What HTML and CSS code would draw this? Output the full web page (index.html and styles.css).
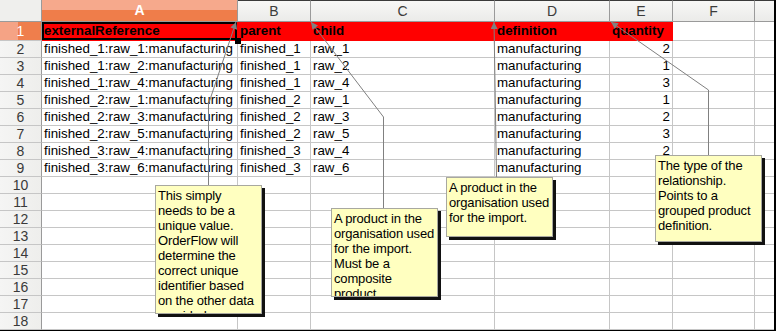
FILE: index.html
```html
<!DOCTYPE html>
<html>
<head>
<meta charset="utf-8">
<link rel="stylesheet" href="styles.css">
</head>
<body>
<div class="sheet">
  <div class="ch corner"></div>
  <div class="ch sel">A</div>
  <div class="ch top">B</div>
  <div class="ch top">C</div>
  <div class="ch top">D</div>
  <div class="ch top">E</div>
  <div class="ch top">F</div>
  <div class="ch top g"></div>

  <div class="rh selr">1</div>
  <div class="c hd a1">externalReference</div>
  <div class="c hd">parent</div>
  <div class="c hd">child</div>
  <div class="c hd">definition</div>
  <div class="c hd">quantity</div>
  <div class="c"></div>
  <div class="c g"></div>

  <div class="rh">2</div><div class="c">finished_1:raw_1:manufacturing</div><div class="c">finished_1</div><div class="c">raw_1</div><div class="c">manufacturing</div><div class="c n">2</div><div class="c"></div><div class="c g"></div>
  <div class="rh">3</div><div class="c">finished_1:raw_2:manufacturing</div><div class="c">finished_1</div><div class="c">raw_2</div><div class="c">manufacturing</div><div class="c n">1</div><div class="c"></div><div class="c g"></div>
  <div class="rh">4</div><div class="c">finished_1:raw_4:manufacturing</div><div class="c">finished_1</div><div class="c">raw_4</div><div class="c">manufacturing</div><div class="c n">3</div><div class="c"></div><div class="c g"></div>
  <div class="rh">5</div><div class="c">finished_2:raw_1:manufacturing</div><div class="c">finished_2</div><div class="c">raw_1</div><div class="c">manufacturing</div><div class="c n">1</div><div class="c"></div><div class="c g"></div>
  <div class="rh">6</div><div class="c">finished_2:raw_3:manufacturing</div><div class="c">finished_2</div><div class="c">raw_3</div><div class="c">manufacturing</div><div class="c n">2</div><div class="c"></div><div class="c g"></div>
  <div class="rh">7</div><div class="c">finished_2:raw_5:manufacturing</div><div class="c">finished_2</div><div class="c">raw_5</div><div class="c">manufacturing</div><div class="c n">3</div><div class="c"></div><div class="c g"></div>
  <div class="rh">8</div><div class="c">finished_3:raw_4:manufacturing</div><div class="c">finished_3</div><div class="c">raw_4</div><div class="c">manufacturing</div><div class="c n">2</div><div class="c"></div><div class="c g"></div>
  <div class="rh">9</div><div class="c">finished_3:raw_6:manufacturing</div><div class="c">finished_3</div><div class="c">raw_6</div><div class="c">manufacturing</div><div class="c n">2</div><div class="c"></div><div class="c g"></div>
  <div class="rh">10</div><div class="c"></div><div class="c"></div><div class="c"></div><div class="c"></div><div class="c"></div><div class="c"></div><div class="c g"></div>
  <div class="rh">11</div><div class="c"></div><div class="c"></div><div class="c"></div><div class="c"></div><div class="c"></div><div class="c"></div><div class="c g"></div>
  <div class="rh">12</div><div class="c"></div><div class="c"></div><div class="c"></div><div class="c"></div><div class="c"></div><div class="c"></div><div class="c g"></div>
  <div class="rh">13</div><div class="c"></div><div class="c"></div><div class="c"></div><div class="c"></div><div class="c"></div><div class="c"></div><div class="c g"></div>
  <div class="rh">14</div><div class="c"></div><div class="c"></div><div class="c"></div><div class="c"></div><div class="c"></div><div class="c"></div><div class="c g"></div>
  <div class="rh">15</div><div class="c"></div><div class="c"></div><div class="c"></div><div class="c"></div><div class="c"></div><div class="c"></div><div class="c g"></div>
  <div class="rh">16</div><div class="c"></div><div class="c"></div><div class="c"></div><div class="c"></div><div class="c"></div><div class="c"></div><div class="c g"></div>
  <div class="rh">17</div><div class="c"></div><div class="c"></div><div class="c"></div><div class="c"></div><div class="c"></div><div class="c"></div><div class="c g"></div>
  <div class="rh">18</div><div class="c"></div><div class="c"></div><div class="c"></div><div class="c"></div><div class="c"></div><div class="c"></div><div class="c g"></div>

  <svg class="leaders" width="776" height="331" viewBox="0 0 776 331">
    <defs>
      <marker id="tip" viewBox="0 0 10 10" refX="10" refY="5" markerWidth="9" markerHeight="7" markerUnits="userSpaceOnUse" orient="auto-start-reverse">
        <path d="M0,0 L10,5 L0,10 z" fill="#808080"/>
      </marker>
    </defs>
    <g fill="none" stroke="#808080" stroke-width="1">
      <polyline points="236,22 208.5,104 208.5,185" marker-start="url(#tip)"/>
      <polyline points="311,22 383.5,117 383.5,208" marker-start="url(#tip)"/>
      <polyline points="494,22 496.5,177" marker-start="url(#tip)"/>
      <polyline points="611,22 708.5,90 708.5,155" marker-start="url(#tip)"/>
    </g>
  </svg>

  <div class="note n1">This simply<br>needs to be a<br>unique value.<br>OrderFlow will<br>determine the<br>correct unique<br>identifier based<br>on the other data<br>provided</div>
  <div class="note n2">A product in the<br>organisation used<br>for the import.<br>Must be a<br>composite<br>product.</div>
  <div class="note n3">A product in the<br>organisation used<br>for the import.</div>
  <div class="note n4">The type of the<br>relationship.<br>Points to a<br>grouped product<br>definition.</div>
</div>
</body>
</html>
```

FILE: styles.css
```css
html, body {
  margin: 0;
  padding: 0;
  background: #ffffff;
}

.sheet {
  position: relative;
  display: grid;
  grid-template-columns: 42px 196px 73px 184px 115px 63px 82px 19px;
  grid-template-rows: 22px 19px repeat(17, 17px);
  width: 774px;
  border-right: 2px solid #000;
  border-bottom: 2px solid #000;
  font-family: "Liberation Sans", Arial, sans-serif;
  font-size: 13.33px;
  color: #000;
}

.sheet > div {
  box-sizing: border-box;
  border-right: 1px solid #c6c6c6;
  border-bottom: 1px solid #c6c6c6;
  white-space: nowrap;
  overflow: hidden;
}

.sheet > .g {
  border-right: none;
}

/* column headers */
.ch {
  background: linear-gradient(#f7f7f6, #ebebe9);
  color: #3c3c3c;
  text-align: center;
  line-height: 21px;
  font-size: 14px;
}
.sheet > .ch {
  border-right-color: #9a9a9a;
  border-bottom-color: #9a9a9a;
}
.ch.top {
  border-top: 1px solid #3a3a3a;
  line-height: 20px;
}
.ch.corner {
  background: #efefed;
}
.ch.sel {
  background: linear-gradient(#f6a98c 0, #f6a98c 48%, #ef7d4a 48%, #ef7d4a 100%);
  color: #ffffff;
  font-weight: bold;
}

/* row headers */
.rh {
  background: linear-gradient(to right, #f5f5f4, #eeeeec);
  color: #3a3a3a;
  text-align: center;
  line-height: 16px;
  font-size: 14px;
}
.sheet > .rh {
  border-right-color: #9a9a9a;
}
.rh.selr {
  background: linear-gradient(to right, #f5a385 0, #f5a385 45%, #ef7e4c 45%, #ef7e4c 100%);
  color: #ffffff;
  line-height: 18px;
}

/* cells */
.c {
  padding: 0 2px;
  line-height: 16px;
  background: #ffffff;
}
.c.n {
  text-align: right;
}
.sheet > .hd {
  background: #ff0000;
  font-weight: bold;
  line-height: 18px;
  border-right-color: #ff0000;
  border-bottom-color: #ff0000;
}
.sheet > .a1 {
  position: relative;
  overflow: visible;
  box-shadow: inset 0 0 0 2px #000;
}
.a1::after {
  content: "";
  position: absolute;
  right: -4px;
  bottom: -4px;
  width: 6px;
  height: 6px;
  background: #000;
  z-index: 3;
}

/* comment leader lines */
.leaders {
  position: absolute;
  left: 0;
  top: 0;
  z-index: 4;
  pointer-events: none;
}

/* comments */
.sheet > .note {
  position: absolute;
  z-index: 5;
  box-sizing: border-box;
  width: 107px;
  padding: 2px 0 0 2px;
  background: #ffffc0;
  border: 1px solid #a8a8a0;
  box-shadow: 3px 3px 0 #111;
  font-size: 13px;
  letter-spacing: -0.15px;
  line-height: 15px;
  white-space: nowrap;
  overflow: hidden;
  color: #000;
}
.n1 { left: 155px; top: 185px; height: 129px; }
.n2 { left: 331px; top: 208px; height: 89px; }
.n3 { left: 446px; top: 177px; height: 60px; }
.n4 { left: 655px; top: 155px; height: 87px; }
```
